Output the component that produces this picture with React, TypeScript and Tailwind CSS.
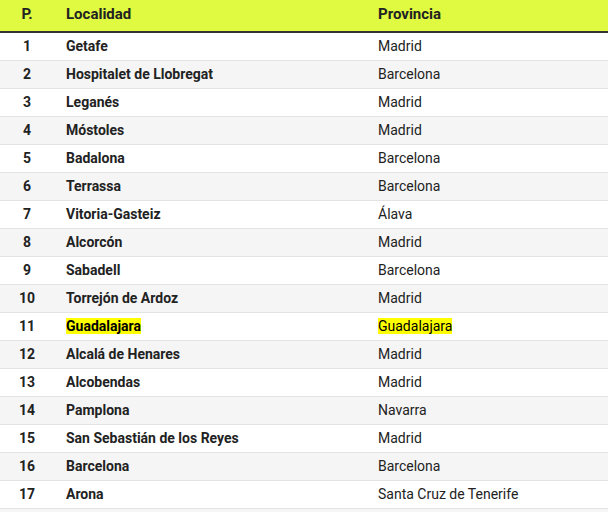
const rows: [number, string, string][] = [
  [1, "Getafe", "Madrid"],
  [2, "Hospitalet de Llobregat", "Barcelona"],
  [3, "Leganés", "Madrid"],
  [4, "Móstoles", "Madrid"],
  [5, "Badalona", "Barcelona"],
  [6, "Terrassa", "Barcelona"],
  [7, "Vitoria-Gasteiz", "Álava"],
  [8, "Alcorcón", "Madrid"],
  [9, "Sabadell", "Barcelona"],
  [10, "Torrejón de Ardoz", "Madrid"],
  [11, "Guadalajara", "Guadalajara"],
  [12, "Alcalá de Henares", "Madrid"],
  [13, "Alcobendas", "Madrid"],
  [14, "Pamplona", "Navarra"],
  [15, "San Sebastián de los Reyes", "Madrid"],
  [16, "Barcelona", "Barcelona"],
  [17, "Arona", "Santa Cruz de Tenerife"],
]

export default function App() {
  return (
    <div className="w-[608px] h-[512px] overflow-hidden bg-white font-['Roboto',sans-serif] text-[14px] text-[#222]">
      <table className="w-full border-collapse table-fixed">
        <colgroup>
          <col className="w-[54px]" />
          <col className="w-[312px]" />
          <col />
        </colgroup>
        <thead>
          <tr className="bg-[#dffa40] h-[32px] border-b-2 border-[#333]">
            <th className="text-center font-bold text-[15px] pb-[3px]">P.</th>
            <th className="text-left font-bold text-[15px] pl-3 pb-[3px]">Localidad</th>
            <th className="text-left font-bold text-[15px] pl-3 pb-[3px]">Provincia</th>
          </tr>
        </thead>
        <tbody>
          {rows.map(([n, loc, prov], i) => {
            const hl = loc === "Guadalajara"
            return (
              <tr
                key={n}
                className={`h-[28px] border-b border-[#e3e3e3] ${i % 2 === 1 ? "bg-[#f5f5f5]" : "bg-white"}`}
              >
                <td className="text-center font-bold">{n}</td>
                <td className="pl-3 font-bold">
                  {hl ? <span className="bg-[#ffff00] text-black">{loc}</span> : loc}
                </td>
                <td className="pl-3">
                  {hl ? <span className="bg-[#ffff00] text-black">{prov}</span> : prov}
                </td>
              </tr>
            )
          })}
          <tr className="h-[28px] bg-[#f5f5f5]">
            <td />
            <td />
            <td />
          </tr>
        </tbody>
      </table>
    </div>
  )
}
